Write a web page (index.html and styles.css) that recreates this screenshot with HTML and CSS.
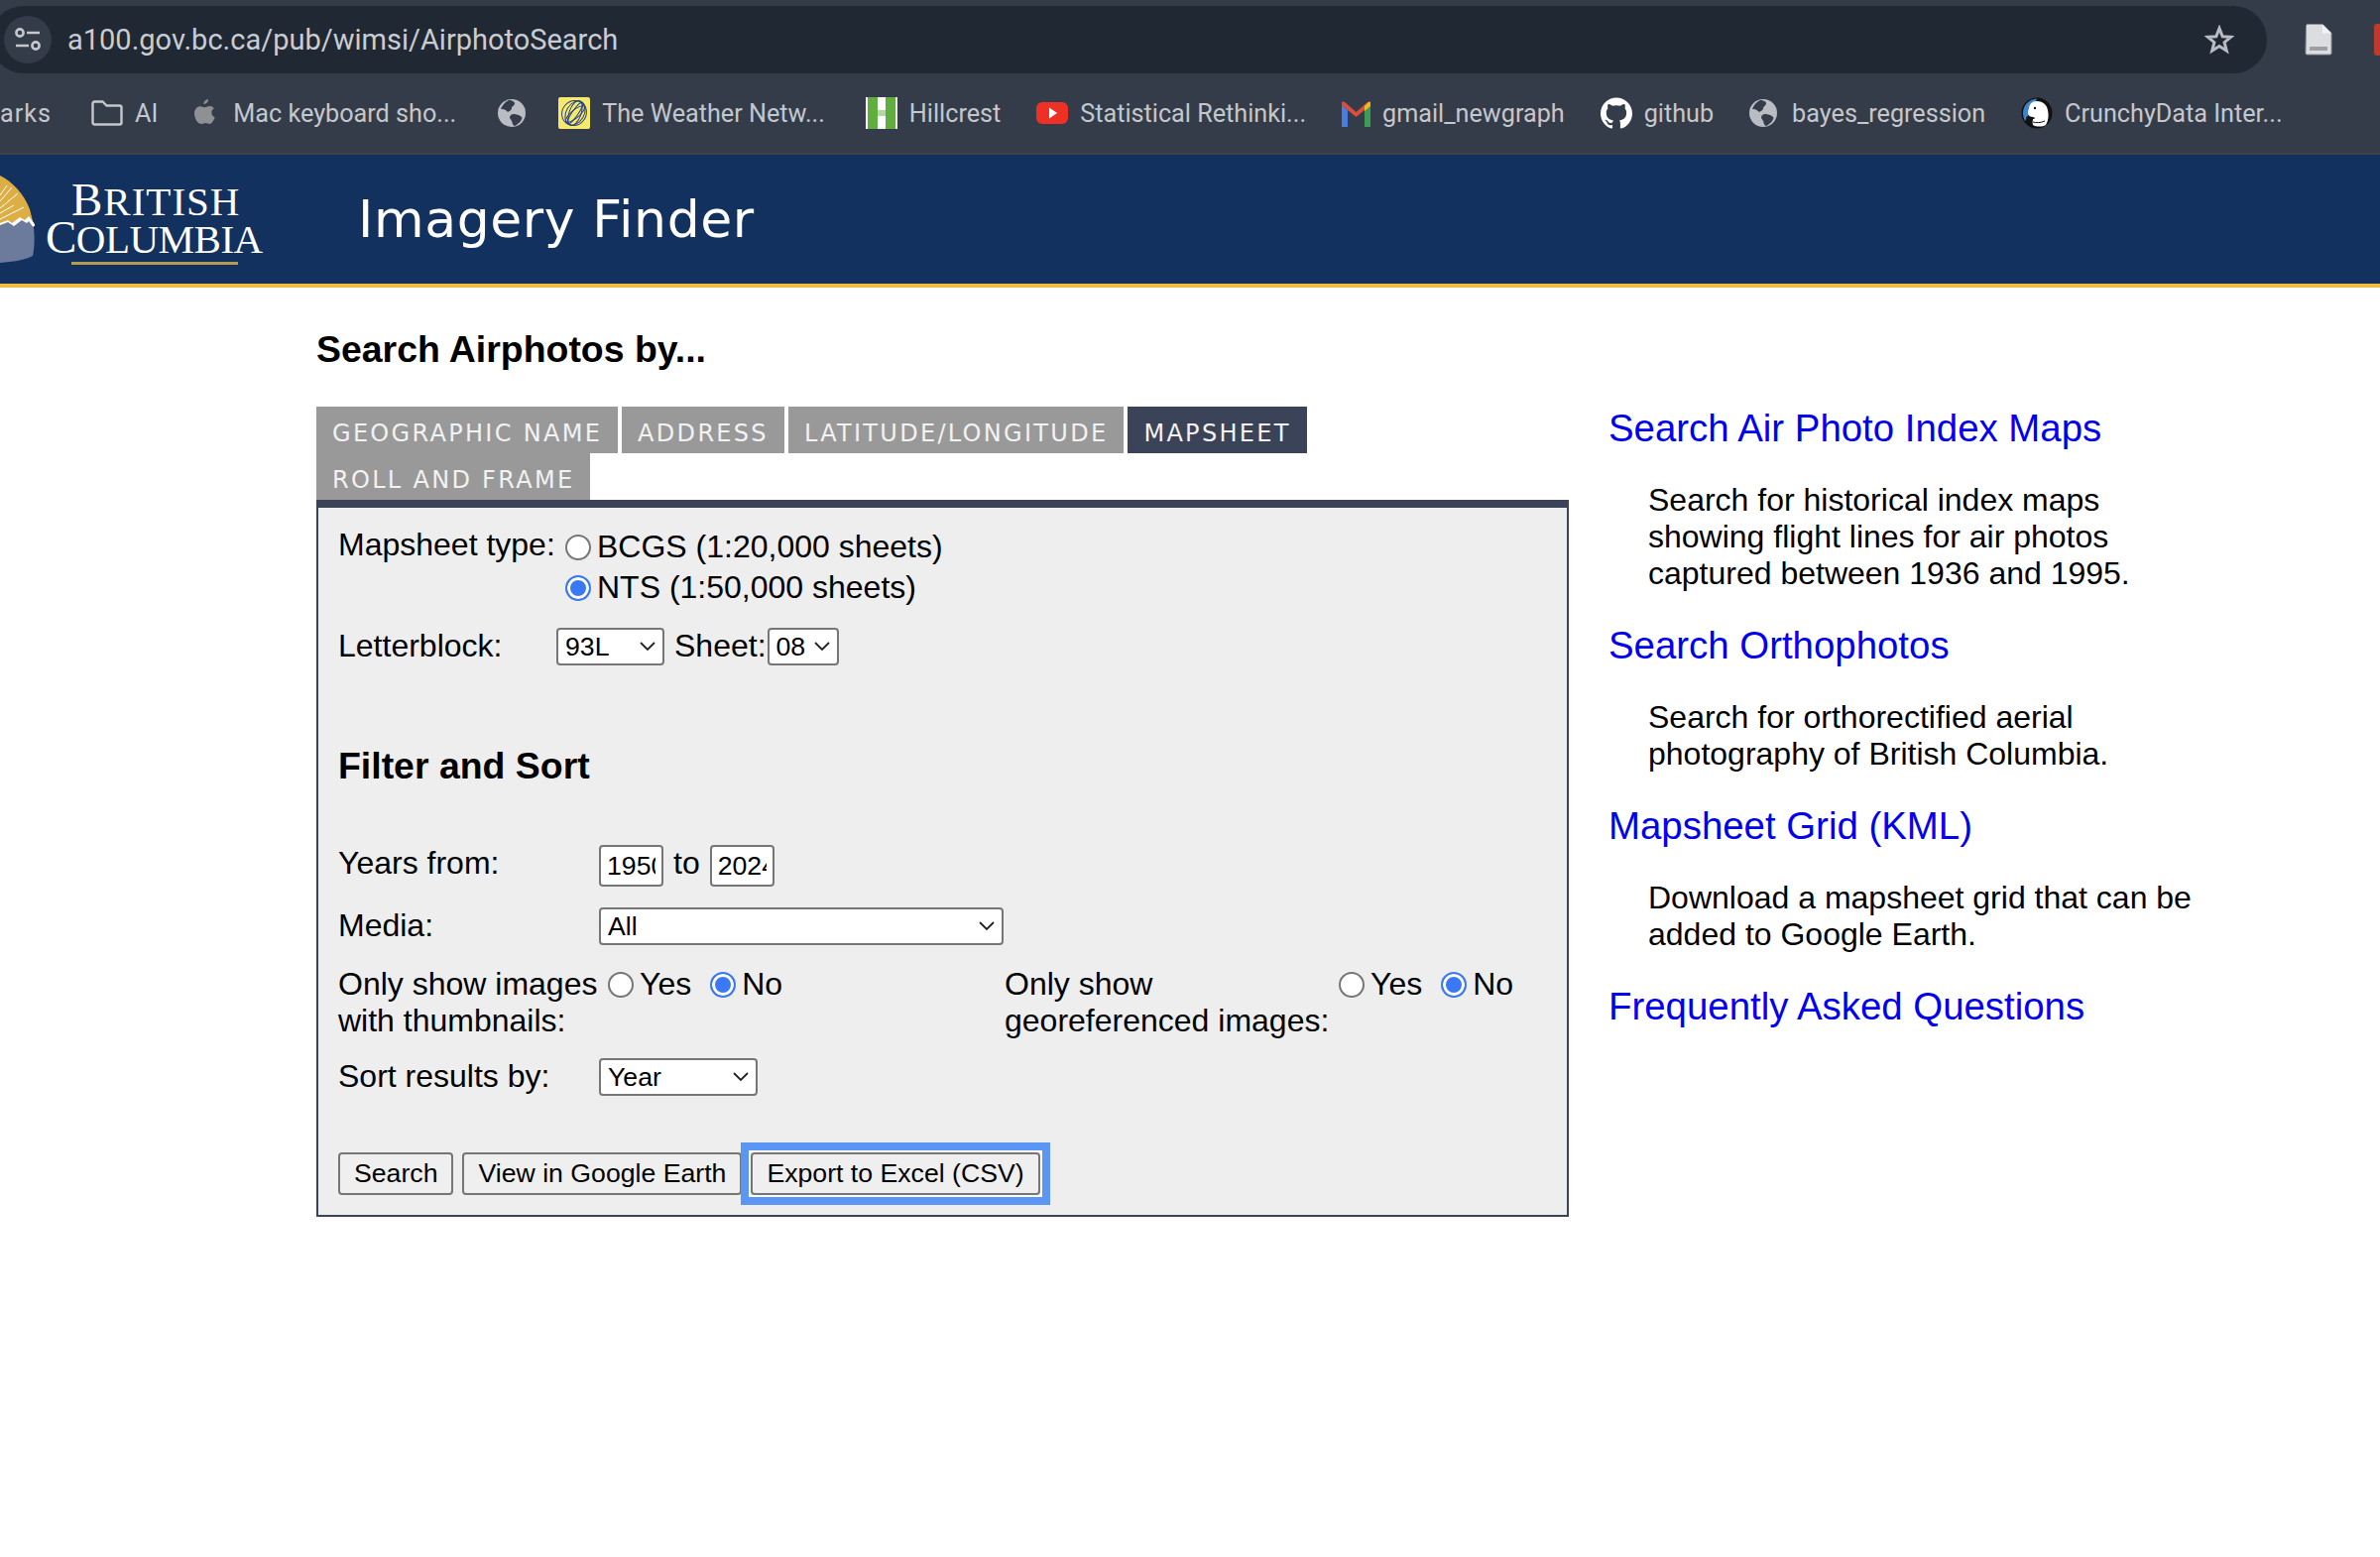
FILE: index.html
```html
<!DOCTYPE html>
<html lang="en">
<head>
    <meta charset="UTF-8">
    <title>Imagery Finder</title>
    <link rel="stylesheet" href="styles.css">
</head>
<body>
    <div class="chrome">
        <div class="toolbar">
            <div class="omnibox">
                <span class="site-info">
                    <svg width="30" height="30" viewBox="0 0 30 30" fill="none" stroke="#c4c7cc" stroke-width="2.6"><circle cx="7" cy="8" r="3.6"/><path d="M14 8h13M3 21h13"/><circle cx="23" cy="21" r="3.6"/></svg>
                </span>
                <span class="url">a100.gov.bc.ca/pub/wimsi/AirphotoSearch</span>
                <svg class="star" width="30" height="30" viewBox="0 0 30 30" fill="none" stroke="#b9bcc3" stroke-width="3" stroke-linejoin="miter"><path d="M15 3.5l3.2 8.2 8.6.5-6.7 5.5 2.2 8.5-7.3-4.7-7.3 4.7 2.2-8.5-6.7-5.500 8.600-.5z"/></svg>
            </div>
            <svg class="doc" width="28" height="32" viewBox="0 0 28 32"><path d="M1.500 2q0-1.500 1.500-1.500h15l9 9v20q0 1.500-1.500 1.500h-23q-1.500 0-1.500-1.500z" fill="#dcdde0" stroke="#8d9097"/><path d="M18 .5v9h9z" fill="#f3f3f4"/><path d="M5 23h18v4H5z" fill="#9d9fa4"/></svg>
            <span class="ext-red"></span>
        </div>
        <div class="bookmarks">
            <span class="bm bm-clip">arks</span>
            <span class="bm">
                <svg class="ico" width="32" height="32" viewBox="0 0 32 32" fill="none" stroke="#c4c7cc" stroke-width="2.400"><path d="M1.500 6.500q0-2 2-2h8l4 4h13q2 0 2 2v15q0 2-2 2h-25q-2 0-2-2z"/></svg>
                AI
            </span>
            <span class="bm bm-tight">
                <svg class="ico-apple" width="22" height="32" viewBox="0 0 22 32"><path d="M15 2c.2 2.600-2 5-4.500 5C10.200 4.500 12.700 2.200 15 2zM16.500 9c1.700 0 3.300.9 4.300 2.300-3.700 2.200-3 7.400.9 9-1 2.700-3 6.700-5.200 6.700-1.500 0-2.200-1-4-1s-2.600 1-4 1C5 28 1 21.500 1 16.500 1 11.800 4 9.200 7 9.200c1.700 0 3.200 1.100 4.300 1.100 1 0 3-1.300 5.200-1.300z" fill="#8e9094"/></svg>
                Mac keyboard sho...
            </span>
            <span class="bm bm-globe-solo">
                <svg class="ico-globe" width="28" height="28" viewBox="0 0 28 28"><circle cx="14" cy="14" r="14" fill="#b9bcc3"/><path d="M11 1C7 3 4.500 6 3 10c3-.5 5.500 1 7 3 1.500-1 4-1.500 4-4 0-2 3-2 3-5 0-1.500-3-3-6-3zM17 15c-2.500-.5-5 1-5 3.500 0 2 2.500 2.500 2.500 5 0 1 1 3 2.500 3.500 4-2 7-5 7.500-8.500-2-2.500-5-3-7.500-3.500z" fill="#343c4a"/></svg>
            </span>
            <span class="bm">
                <svg class="ico" width="32" height="32" viewBox="0 0 32 32" fill="none"><rect width="32" height="32" rx="2" fill="#f7e96a"/><g stroke="#27408c" stroke-width="1"><ellipse cx="17" cy="16" rx="6" ry="13" transform="rotate(20 17 16)"/><ellipse cx="17" cy="16" rx="9" ry="13" transform="rotate(30 17 16)"/><ellipse cx="17" cy="16" rx="3" ry="13" transform="rotate(35 17 16)"/><ellipse cx="16" cy="16" rx="12" ry="13" transform="rotate(40 16 16)"/><ellipse cx="17" cy="17" rx="4" ry="12" transform="rotate(50 17 17)"/></g></svg>
                The Weather Netw...
            </span>
            <span class="bm bm-hill">
                <svg class="ico" width="32" height="32" viewBox="0 0 32 32" shape-rendering="crispEdges"><rect width="32" height="32" fill="#fff"/><path d="M2 0h10v13h8V0h10v32H20V19h-8v13H2z" fill="#5fae3f"/><path d="M12 13h8v6h-8z" fill="#b5d6a4"/></svg>
                Hillcrest
            </span>
            <span class="bm">
                <svg class="ico" width="32" height="32" viewBox="0 0 32 32"><rect y="5" width="32" height="22" rx="6" fill="#ee3124"/><path d="M13 10.500l8 5.500-8 5.500z" fill="#fff"/></svg>
                Statistical Rethinki...
            </span>
            <span class="bm bm-gmail">
                <svg class="ico" width="29" height="32" viewBox="0 0 29 32"><path d="M0 8v22h6V13z" fill="#4a7de0"/><path d="M23 13v17h6V8z" fill="#3f9c58"/><path d="M0 5.500c0-1 1.500-1.500 3-.5l11.500 10L26 5c1.500-1 3-.5 3 .5V8L14.500 20 0 8z" fill="#d94f3d"/><path d="M23 9l4-4c1-.5 2 0 2 1v3l-6 5z" fill="#f2b91d"/></svg>
                gmail_newgraph
            </span>
            <span class="bm">
                <svg class="ico" width="32" height="32" viewBox="0 0 24 24"><path fill="#fff" d="M12 .297c-6.630 0-12 5.373-12 12 0 5.303 3.438 9.800 8.205 11.385.6.113.82-.258.82-.577 0-.285-.01-1.040-.015-2.040-3.338.724-4.042-1.610-4.042-1.610C4.422 18.070 3.633 17.700 3.633 17.700c-1.087-.744.084-.729.084-.729 1.205.084 1.838 1.236 1.838 1.236 1.070 1.835 2.809 1.305 3.495.998.108-.776.417-1.305.76-1.605-2.665-.3-5.466-1.332-5.466-5.930 0-1.310.465-2.380 1.235-3.220-.135-.303-.54-1.523.105-3.176 0 0 1.005-.322 3.300 1.230.96-.267 1.980-.399 3-.405 1.020.006 2.040.138 3 .405 2.280-1.552 3.285-1.230 3.285-1.230.645 1.653.24 2.873.12 3.176.765.84 1.230 1.910 1.230 3.220 0 4.610-2.805 5.625-5.475 5.920.42.36.81 1.096.81 2.220 0 1.606-.015 2.896-.015 3.286 0 .315.21.69.825.57C20.565 22.092 24 17.592 24 12.297c0-6.627-5.373-12-12-12"/></svg>
                github
            </span>
            <span class="bm">
                <svg class="ico-globe" width="28" height="28" viewBox="0 0 28 28"><circle cx="14" cy="14" r="14" fill="#b9bcc3"/><path d="M11 1C7 3 4.500 6 3 10c3-.5 5.500 1 7 3 1.500-1 4-1.500 4-4 0-2 3-2 3-5 0-1.500-3-3-6-3zM17 15c-2.500-.5-5 1-5 3.500 0 2 2.500 2.500 2.500 5 0 1 1 3 2.500 3.500 4-2 7-5 7.500-8.500-2-2.500-5-3-7.500-3.500z" fill="#343c4a"/></svg>
                bayes_regression
            </span>
            <span class="bm">
                <svg class="ico" width="32" height="32" viewBox="0 0 32 32"><ellipse cx="16" cy="16" rx="15.500" ry="15.500" fill="#111"/><path d="M16 1.500C8 2 2 8 2 16c0 3 1 6 2 8l12-22z" fill="#3d85c6"/><path d="M8 12c0-5 3-8 8-8s10 3 11 9c1 5 1 10-2 15-3 2-10 2-13 0-1-3 0-6 1-8-3 0-6-1-6-4 0-2 0-3 1-4z" fill="#fff"/><circle cx="14" cy="11" r="1.200" fill="#111"/><path d="M5 20c3 2 6 2 9 1M12 25c3 1 8 1 12-1" stroke="#111" fill="none"/></svg>
                CrunchyData Inter...
            </span>
        </div>
    </div>

    <header class="site-header">
        <div class="logo">
            <svg class="logo-mark" width="36" height="90" viewBox="0 0 36 90">
                <path d="M0 0c12 6 24 18 30 34l4 16v2L0 52z" fill="#dcae43"/>
                <path d="M0 48l8-3 4 3 8-6 5 3 4-4 6 8v2L0 56z" fill="#fff"/>
                <path d="M0 44L24 32M0 38L14 30M0 33L18 18M0 26L12 12M0 20L7 10" stroke="#fff" stroke-width="1"/>
                <path d="M0 50l8-3 6 4 8-6 5 3 2-2 5 7c1 9 1 18-1 28-8 4-20 6-33 7z" fill="#6c7a9c"/>
            </svg>
            <div class="logo-text">
                <span class="logo-line logo-british">British</span>
                <span class="logo-line logo-columbia">Columbia</span>
                <span class="logo-rule"></span>
            </div>
        </div>
        <span class="site-title">Imagery Finder</span>
    </header>

    <main class="page">
        <section class="search-col">
            <h3 class="search-title">Search Airphotos by...</h3>
            <nav class="tabs">
                <a class="tab" href="#">Geographic Name</a>
                <a class="tab" href="#">Address</a>
                <a class="tab" href="#">Latitude/Longitude</a>
                <a class="tab tab-active" href="#">Mapsheet</a>
                <a class="tab" href="#">Roll and Frame</a>
            </nav>
            <form class="panel">
                <div class="row">
                    <span class="label label-short">Mapsheet type:</span>
                    <div class="radio-stack">
                        <label class="radio-line"><input type="radio" name="mapsheet">BCGS (1:20,000 sheets)</label>
                        <label class="radio-line"><input type="radio" name="mapsheet" checked>NTS (1:50,000 sheets)</label>
                    </div>
                </div>
                <div class="row row-letterblock">
                    <span class="label label-short">Letterblock:</span>
                    <select class="select-letter"><option>93L</option></select>
                    <span class="label sheet-label">Sheet:</span>
                    <select class="select-sheet"><option>08</option></select>
                </div>

                <h3 class="filter-title">Filter and Sort</h3>

                <div class="row row-years">
                    <span class="label">Years from:</span>
                    <input class="year" type="text" value="1950">
                    <span class="label to-label">to</span>
                    <input class="year" type="text" value="2024">
                </div>
                <div class="row row-media">
                    <span class="label">Media:</span>
                    <select class="select-media"><option>All</option></select>
                </div>
                <div class="row row-only">
                    <div class="only-half">
                        <span class="label">Only show images<br>with thumbnails:</span>
                        <label class="radio-line"><input type="radio" name="thumbs">Yes</label>
                        <label class="radio-line radio-no"><input type="radio" name="thumbs" checked>No</label>
                    </div>
                    <div class="only-half only-geo">
                        <span class="label label-geo">Only show<br>georeferenced images:</span>
                        <label class="radio-line"><input type="radio" name="geo">Yes</label>
                        <label class="radio-line radio-no"><input type="radio" name="geo" checked>No</label>
                    </div>
                </div>
                <div class="row row-sort">
                    <span class="label">Sort results by:</span>
                    <select class="select-sort"><option>Year</option></select>
                </div>
                <div class="buttons">
                    <button type="button">Search</button>
                    <button type="button">View in Google Earth</button>
                    <button type="button" class="btn-focus">Export to Excel (CSV)</button>
                </div>
            </form>
        </section>

        <aside class="side-col">
            <a class="side-link" href="#">Search Air Photo Index Maps</a>
            <p>Search for historical index maps<br>showing flight lines for air photos<br>captured between 1936 and 1995.</p>
            <a class="side-link" href="#">Search Orthophotos</a>
            <p>Search for orthorectified aerial<br>photography of British Columbia.</p>
            <a class="side-link" href="#">Mapsheet Grid (KML)</a>
            <p>Download a mapsheet grid that can be<br>added to Google Earth.</p>
            <a class="side-link" href="#">Frequently Asked Questions</a>
        </aside>
    </main>
</body>
</html>
```

FILE: styles.css
```css
* {
    box-sizing: border-box;
}

html, body {
    height: 100%;
}

body {
    margin: 0;
    overflow: hidden;
    background-color: #fff;
    color: #000;
    font-family: "Liberation Sans", Arial, sans-serif;
    font-size: 32px;
    line-height: 37px;
}

/* browser chrome */
.chrome {
    background-color: #343c4a;
    height: 156px;
    border-bottom: 2px solid #3f4347;
    font-family: Roboto, sans-serif;
    overflow: hidden;
}

.toolbar {
    display: flex;
    align-items: center;
    height: 74px;
    padding-top: 6px;
}

.omnibox {
    display: flex;
    align-items: center;
    flex: none;
    width: 2296px;
    height: 68px;
    margin-left: -10px;
    padding-left: 14px;
    padding-right: 33px;
    background-color: #1f2833;
    border-radius: 34px;
}

.site-info {
    display: flex;
    align-items: center;
    justify-content: center;
    width: 48px;
    height: 48px;
    border-radius: 50%;
    background-color: #343c4a;
}

.url {
    flex: 1;
    margin-left: 16px;
    color: #c9ccd2;
    font-size: 29px;
    line-height: 36px;
}

.doc {
    flex: none;
    margin-left: 38px;
}

.ext-red {
    flex: none;
    width: 20px;
    height: 32px;
    margin-left: 42px;
    background-color: #c0392f;
    border-radius: 3px;
}

.bookmarks {
    display: flex;
    align-items: center;
    gap: 36px;
    height: 80px;
    color: #c4c7cc;
    font-size: 25.2px;
    white-space: nowrap;
}

.bm {
    display: flex;
    align-items: center;
    gap: 12px;
}

.bm-clip {
    margin-left: 0;
    margin-right: 4px;
    letter-spacing: 1px;
}

.bm-tight {
    gap: 18px;
}

.bm-globe-solo {
    margin-left: 6px;
    margin-right: -6px;
}

.bm-hill {
    margin-left: 5px;
}

.ico-globe {
    margin-right: 3px;
}

/* site header */
.site-header {
    display: flex;
    align-items: center;
    height: 134px;
    background-color: #12315f;
    border-bottom: 4px solid #f0bb45;
    color: #fff;
}

.logo {
    display: flex;
    align-items: center;
    width: 361px;
}

.logo-mark {
    flex: none;
    margin-top: 2px;
    margin-right: 10px;
}

.logo-text {
    display: flex;
    flex-direction: column;
    margin-top: 8px;
    font-family: "Liberation Serif", serif;
    text-transform: uppercase;
    line-height: 36px;
}

.logo-line {
    display: block;
    font-size: 41px;
    letter-spacing: -0.5px;
}

.logo-line::first-letter {
    font-size: 47px;
}

.logo-british {
    margin-left: 26px;
    letter-spacing: 1px;
}

.logo-rule {
    display: block;
    width: 168px;
    height: 3px;
    margin-top: 5px;
    margin-left: 26px;
    background-color: #b59b4e;
}

.site-title {
    font-family: "DejaVu Sans", sans-serif;
    font-size: 52px;
    line-height: 60px;
    letter-spacing: 0.6px;
}

/* page columns */
.page {
    display: flex;
    padding-left: 319px;
}

.search-col {
    width: 1263px;
    flex: none;
}

.side-col {
    margin-left: 40px;
    padding-top: 120px;
}

.search-title {
    margin: 0;
    padding-top: 41px;
    font-size: 37.44px;
    line-height: 42px;
}

/* tabs */
.tabs {
    display: flex;
    flex-wrap: wrap;
    column-gap: 4px;
    margin-top: 37px;
}

.tab {
    height: 47px;
    padding: 8px 16px 0;
    background-color: #999;
    color: #f2f2f2;
    font-family: "DejaVu Sans", sans-serif;
    font-size: 24px;
    line-height: 39px;
    letter-spacing: 2.3px;
    text-decoration: none;
    text-transform: uppercase;
}

.tab-active {
    background-color: #3a4358;
}

/* search form */
.panel {
    height: 723px;
    padding: 19px 20px 20px;
    background-color: #eee;
    border: 2px solid #3a4358;
    border-top-width: 8px;
}

.row {
    display: flex;
    align-items: flex-start;
}

.label {
    width: 263px;
    flex: none;
}

.label-short {
    width: 220px;
}

.sheet-label {
    width: auto;
    margin-left: 10px;
    margin-right: 1px;
}

.to-label {
    width: auto;
    margin: 0 10px;
}

.label-geo {
    width: 328px;
}

.radio-stack {
    display: flex;
    flex-direction: column;
}

.radio-line {
    display: flex;
    align-items: center;
    height: 41px;
    margin-top: -2px;
}

.radio-stack .radio-line {
    margin-top: 0;
}

.radio-no {
    margin-left: 10px;
}

input[type="radio"] {
    appearance: none;
    width: 26px;
    height: 26px;
    margin: 0 6px 0 9px;
    background-color: #fff;
    border: 2px solid #767676;
    border-radius: 50%;
}

input[type="radio"]:checked {
    background-color: #3b78f5;
    border-color: #3b78f5;
    box-shadow: inset 0 0 0 3px #fff;
}

select {
    appearance: none;
    height: 38px;
    padding: 0 10px 0 7px;
    background-color: #fff;
    background-image: url("data:image/svg+xml,%3Csvg xmlns='http://www.w3.org/2000/svg' width='16' height='10'%3E%3Cpath d='M1 1l7 7 7-7' fill='none' stroke='%23222' stroke-width='1.800'/%3E%3C/svg%3E");
    background-repeat: no-repeat;
    background-position: right 7px center;
    border: 2px solid #767676;
    border-radius: 4px;
    color: #000;
    font-family: "Liberation Sans", Arial, sans-serif;
    font-size: 26.67px;
}

.select-letter {
    width: 109px;
}

.select-sheet {
    width: 72px;
}

.select-media {
    width: 408px;
}

.select-sort {
    width: 160px;
}

.row-letterblock {
    margin-top: 20px;
}

.filter-title {
    margin: 80px 0 0;
    font-size: 37.44px;
    line-height: 42px;
}

.row-years {
    margin-top: 59px;
}

.year {
    width: 65px;
    height: 42px;
    padding: 0 6px;
    background-color: #fff;
    border: 2px solid #767676;
    border-radius: 4px;
    font-family: "Liberation Sans", Arial, sans-serif;
    font-size: 26.67px;
}

.row-media {
    margin-top: 21px;
}

.row-only {
    margin-top: 21px;
}

.only-half {
    display: flex;
    align-items: flex-start;
    flex: none;
    width: 672px;
}

.only-geo {
    width: 540px;
}

.row-sort {
    margin-top: 19px;
}

.buttons {
    display: flex;
    gap: 9px;
    margin-top: 57px;
}

button {
    height: 43px;
    padding: 0 14px;
    background-color: #efefef;
    border: 2px solid #767676;
    border-radius: 4px;
    color: #000;
    font-family: "Liberation Sans", Arial, sans-serif;
    font-size: 26.67px;
}

.btn-focus {
    position: relative;
}

/* square focus ring, sits over the button edge */
.btn-focus::after {
    content: "";
    position: absolute;
    inset: -12px;
    border: 8px solid #5b96f5;
    box-shadow: inset 0 0 0 2px #fff;
}

/* right column */
.side-link {
    display: block;
    color: #0000ee;
    font-size: 38.4px;
    line-height: 44px;
    text-decoration: none;
}

.side-col p {
    margin: 32px 0 32px 40px;
}
```
